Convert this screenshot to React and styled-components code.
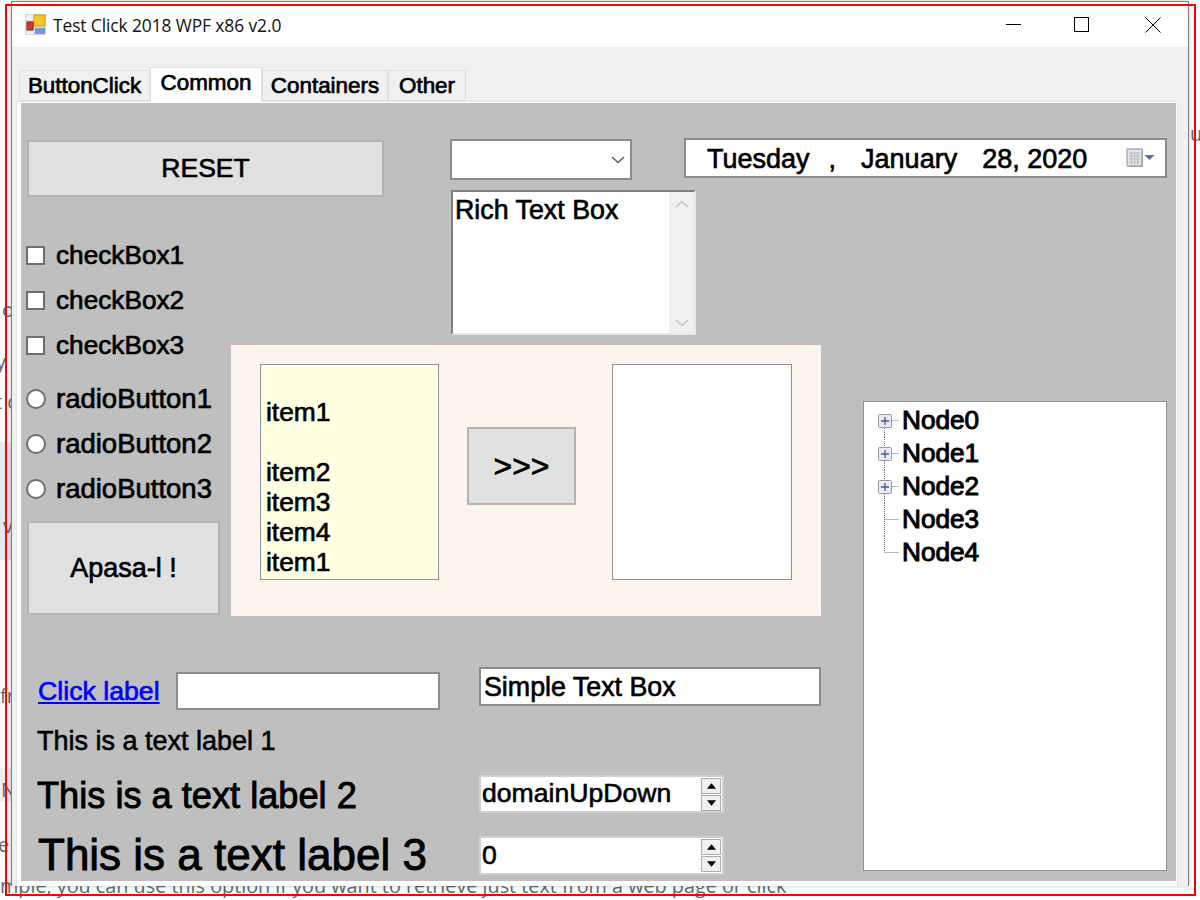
import React from "react";
import styled, { createGlobalStyle } from "styled-components";

const Global = createGlobalStyle`
  html, body { margin: 0; padding: 0; background: #fff; }
  body { font-family: "Liberation Sans", Arial, sans-serif; color: #000; }
`;

const Page = styled.div`
  position: relative;
  width: 1200px;
  height: 900px;
  overflow: hidden;
  background: #fff;
`;

const Fragment = styled.span`
  position: absolute;
  left: ${(p) => p.$x}px;
  top: ${(p) => p.$y}px;
  font: 19.8px/24px "Open Sans", sans-serif;
  color: #63676c;
  white-space: nowrap;
`;

const Shade = styled.div`
  position: absolute;
  left: 0;
  width: 12px;
  top: ${(p) => p.$y}px;
  height: ${(p) => p.$h}px;
  background: ${(p) => p.$c};
`;

const RedFrame = styled.div`
  position: absolute;
  left: 5px;
  top: 4px;
  width: 1187px;
  height: 888px;
  border: 2px solid #fe0000;
  pointer-events: none;
  z-index: 3;
`;

const Window = styled.div`
  position: relative;
  z-index: 1;
  box-sizing: border-box;
  margin: 1px 0 0 11px;
  width: 1178px;
  height: 885px;
  border: 1px solid #7f7f7f;
  border-bottom: 0;
  background: #f0f0f0;
  box-shadow: 0 0 5px rgba(0, 0, 0, 0.22);
  display: flex;
  flex-direction: column;
`;

const TitleBar = styled.div`
  height: 45px;
  flex: none;
  background: #fff;
  display: flex;
  align-items: center;
  padding-left: 13px;
`;

const TitleText = styled.span`
  margin-left: 6px;
  font: 17.4px/20px "Open Sans", sans-serif;
  letter-spacing: -0.1px;
  color: #111;
`;

const Controls = styled.div`
  margin-left: auto;
  display: flex;
  height: 100%;
  align-items: center;
`;

const ControlSlot = styled.div`
  width: ${(p) => p.$w}px;
  display: flex;
  justify-content: center;
`;

const TabStrip = styled.div`
  height: 54px;
  flex: none;
  padding: 19px 0 0 7px;
  box-sizing: border-box;
  display: flex;
  align-items: flex-end;
`;

const Tab = styled.div`
  box-sizing: border-box;
  width: ${(p) => p.$w}px;
  height: ${(p) => (p.$active ? 35 : 31)}px;
  margin-bottom: ${(p) => (p.$active ? -1 : 0)}px;
  background: ${(p) => (p.$active ? "#fff" : "#f0f0f0")};
  border: 1px solid #e0e0e0;
  border-bottom: ${(p) => (p.$active ? 0 : "1px solid #e0e0e0")};
  font-size: 22.4px;
  line-height: 30px;
  text-align: center;
  -webkit-text-stroke: 0.7px #000;
  position: relative;
  z-index: ${(p) => (p.$active ? 1 : 0)};
`;

const TabPage = styled.div`
  flex: none;
  box-sizing: border-box;
  margin-left: 4px;
  width: 1162px;
  height: 785px;
  padding: 1px 1px 3px 4px;
  background: #fff;
  border: 1px solid #e4e4e4;
  border-bottom: 0;
`;

const Panel = styled.div`
  width: 1155px;
  height: 778px;
  background: #bfbfbf;
  display: grid;
  grid-template-columns: 210px 219px 371px 355px;
  grid-template-rows: 127px 115px 271px 265px;
`;

const ResetCell = styled.div`
  grid-column: 1 / 3;
  grid-row: 1;
  padding: 37px 0 0 6px;
`;

const PushButton = styled.div`
  box-sizing: border-box;
  width: ${(p) => p.$w}px;
  height: ${(p) => p.$h}px;
  background: #e1e1e1;
  border: 2px solid #b4b4b4;
  display: flex;
  align-items: center;
  justify-content: center;
  font-size: ${(p) => p.$size || 26}px;
  -webkit-text-stroke: 0.65px #000;
  flex: none;
`;

const LeftList = styled.div`
  grid-column: 1;
  grid-row: 2 / 4;
  padding: 3px 0 0 5px;
`;

const ChoiceRow = styled.div`
  height: 45px;
  display: flex;
  align-items: center;
  gap: ${(p) => p.$gap}px;
  font-size: ${(p) => p.$size}px;
  -webkit-text-stroke: 0.7px #000;
  white-space: nowrap;
  margin-top: ${(p) => p.$mt || 0}px;
`;

const CheckBox = styled.span`
  box-sizing: border-box;
  width: 19px;
  height: 19px;
  background: #fff;
  border: 2px solid #6e6e6e;
  flex: none;
`;

const Radio = styled(CheckBox)`
  border-radius: 50%;
  width: 20px;
  height: 20px;
`;

const ApasaWrap = styled.div`
  margin: 10px 0 0 1px;
`;

const TopRight = styled.div`
  grid-column: 3 / 5;
  grid-row: 1 / 3;
  padding-top: 36px;
  display: flex;
  flex-direction: column;
`;

const TopRow = styled.div`
  display: flex;
  gap: 52px;
`;

const FieldBox = styled.div`
  box-sizing: border-box;
  width: ${(p) => p.$w}px;
  height: ${(p) => p.$h}px;
  background: #fff;
  border: 2px solid #8c8c8c;
  display: flex;
  align-items: center;
  font-size: ${(p) => p.$size || 26}px;
  -webkit-text-stroke: 0.65px #000;
  white-space: nowrap;
  flex: none;
`;

const DateField = styled(FieldBox)`
  position: relative;
  margin-top: -1px;
  padding: 2px 0 0 21px;
`;

const DatePart = styled.span`
  margin-right: ${(p) => p.$mr}px;
`;

const DateIcon = styled.span`
  margin-left: auto;
  margin-right: 9px;
  margin-top: -2px;
  display: flex;
`;

const ComboChevron = styled.span`
  margin-left: auto;
  margin-right: 5px;
  display: flex;
`;

const RichBox = styled.div`
  box-sizing: border-box;
  margin: 10px 0 0 1px;
  width: 245px;
  height: 145px;
  background: #fff;
  border: 2px solid;
  border-color: #808080 #e8e8e8 #e8e8e8 #808080;
  display: flex;
  font-size: 26.8px;
  -webkit-text-stroke: 0.65px #000;
`;

const RichText = styled.div`
  flex: 1;
  padding: 3px 0 0 2px;
  line-height: 30px;
`;

const ScrollTrack = styled.div`
  width: 25px;
  background: #f0f0f0;
  display: flex;
  flex-direction: column;
  align-items: center;
  justify-content: space-between;
  padding: 8px 0 6px;
`;

const PeachPanel = styled.div`
  grid-column: 2 / 4;
  grid-row: 3;
  background: #fff3ee;
  padding: 19px 0 0 29px;
  display: flex;
  align-items: flex-start;
`;

const ListBox = styled.div`
  box-sizing: border-box;
  width: ${(p) => p.$w}px;
  height: 216px;
  flex: none;
  margin-left: ${(p) => p.$ml || 0}px;
  background: ${(p) => p.$bg};
  border: 1px solid #8f8f98;
  padding: 2px 0 0 5px;
  font-size: 26.4px;
  line-height: 30px;
  -webkit-text-stroke: 0.65px #000;
`;

const ListLine = styled.div`
  height: 30px;
`;

const MoveWrap = styled.div`
  margin: 63px 0 0 28px;
`;

const TreeCell = styled.div`
  grid-column: 4;
  grid-row: 3 / 5;
  padding: 56px 0 0 42px;
`;

const TreeBox = styled.div`
  box-sizing: border-box;
  width: 304px;
  height: 470px;
  background: #fff;
  border: 1px solid #8f949a;
  padding: 2px 0 0 10px;
`;

const TreeRow = styled.div`
  height: 33px;
  display: flex;
  align-items: center;
  font-size: 26.2px;
  -webkit-text-stroke: 1px #000;
`;

const TreeLabel = styled.span`
  margin-left: 2px;
`;

const BottomArea = styled.div`
  grid-column: 1 / 4;
  grid-row: 4;
  display: flex;
`;

const BottomLeft = styled.div`
  width: 458px;
  flex: none;
  box-sizing: border-box;
  padding: 56px 0 0 17px;
`;

const ClickRow = styled.div`
  display: flex;
  align-items: center;
  height: 38px;
`;

const ClickLink = styled.a`
  width: 138px;
  flex: none;
  padding-top: 1px;
  font-size: 26.7px;
  color: #0000ff;
  text-decoration: underline;
  -webkit-text-stroke: 0.65px #0000ff;
`;

const TextLabel = styled.div`
  font-size: ${(p) => p.$size}px;
  line-height: ${(p) => p.$lh}px;
  height: ${(p) => p.$lh}px;
  margin: ${(p) => p.$mt}px 0 0 ${(p) => p.$ml}px;
  -webkit-text-stroke: ${(p) => p.$stroke}px #000;
  white-space: nowrap;
`;

const BottomRight = styled.div`
  padding-top: 51px;
`;

const SimpleBox = styled(FieldBox)`
  padding: 2px 0 0 3px;
`;

const SpinBox = styled.div`
  box-sizing: border-box;
  width: 245px;
  height: ${(p) => p.$h}px;
  margin-top: ${(p) => p.$mt}px;
  background: #fff;
  border: 2px solid #d0d0d0;
  padding-left: 1px;
  display: flex;
  align-items: center;
  font-size: 26.6px;
  -webkit-text-stroke: 0.6px #000;
`;

const SpinText = styled.span`
  margin-top: ${(p) => p.$mt || 0}px;
`;

const Spin = styled.div`
  margin-left: auto;
  margin-right: 1px;
  display: flex;
  flex-direction: column;
  gap: 1px;
`;

const SpinButton = styled.div`
  box-sizing: border-box;
  width: 20px;
  height: 16px;
  background: #f0f0f0;
  border: 1px solid #adadad;
  display: flex;
  align-items: center;
  justify-content: center;
`;

const Logo = () => (
  <svg width="22" height="22" viewBox="0 0 22 22">
    <rect x="0" y="0" width="21" height="21" fill="#d8d8d8" />
    <rect x="1" y="1" width="7" height="5" fill="#f1f1f1" />
    <rect x="9" y="1" width="11" height="11" fill="#f6c62e" stroke="#d49a10" />
    <rect x="2" y="8" width="6" height="8" fill="#cc3a30" stroke="#8e2018" />
    <rect x="10" y="14" width="10" height="6" fill="#6d9ae6" />
    <rect x="1" y="17" width="7" height="3" fill="#f1f1f1" />
  </svg>
);

const Minimize = () => (
  <svg width="16" height="16" viewBox="0 0 16 16"><path d="M0 7.5H15" stroke="#000" strokeWidth="1" /></svg>
);
const Maximize = () => (
  <svg width="16" height="16" viewBox="0 0 16 16"><rect x="0.5" y="0.5" width="14" height="14" fill="none" stroke="#000" /></svg>
);
const CloseIcon = () => (
  <svg width="16" height="16" viewBox="0 0 16 16"><path d="M0.5 0.5L15.5 15.5M15.5 0.5L0.5 15.5" stroke="#000" strokeWidth="1" /></svg>
);

const Chevron = ({ up, color = "#606060", w = 14 }) => (
  <svg width={w} height="8" viewBox="0 0 14 8">
    <path d={up ? "M1 7L7 1.5L13 7" : "M1 1L7 6.5L13 1"} fill="none" stroke={color} strokeWidth="1.6" />
  </svg>
);

const CalendarIcon = () => (
  <svg width="30" height="20" viewBox="0 0 30 20">
    <rect x="2" y="2" width="15" height="17" fill="#b9b9b9" />
    <rect x="1" y="1" width="15" height="17" fill="#dfe3ea" stroke="#8d9199" />
    <path d="M3 5H14M3 8H14M3 11H14M3 14H14M5.5 4V16M8.5 4V16M11.5 4V16" stroke="#aeb4c0" strokeWidth="0.8" />
    <path d="M18.5 7H28.5L23.5 12Z" fill="#5a6f9c" />
  </svg>
);

const Arrow = ({ up }) => (
  <svg width="9" height="6" viewBox="0 0 8 5">
    <path d={up ? "M0 5H8L4 0Z" : "M0 0H8L4 5Z"} fill="#000" />
  </svg>
);

const TreeGlyph = ({ plus, first, last }) => (
  <svg width="26" height="33" viewBox="0 0 26 33" style={{ flex: "none" }}>
    <path
      d={`M10.5 ${first ? 16 : 0}V${last ? 16 : 33}`}
      stroke="#707070"
      strokeDasharray="1 1"
      fill="none"
    />
    <path d="M10.5 16.5H25" stroke="#707070" strokeDasharray="1 1" fill="none" />
    {plus && (
      <g>
        <rect x="4.5" y="10.5" width="13" height="13" rx="1" fill="#e9ebf1" stroke="#999" />
        <path d="M7 17H15M11 13V21" stroke="#3f5a9c" strokeWidth="1.3" />
      </g>
    )}
  </svg>
);

const SpinControl = () => (
  <Spin>
    <SpinButton><Arrow up /></SpinButton>
    <SpinButton><Arrow /></SpinButton>
  </Spin>
);

const bottomCopy =
  "mple, you can use this option if you want to retrieve just text from a web page or click";

export default function App() {
  return (
    <Page>
      <Global />
      <Shade $y={442} $h={118} $c="#e4eaf0" />
      <Shade $y={768} $h={34} $c="#efefef" />
      <Fragment $x={2} $y={298}>o</Fragment>
      <Fragment $x={-4} $y={350}>y s</Fragment>
      <Fragment $x={-5} $y={390}>t c</Fragment>
      <Fragment $x={3} $y={514}>v</Fragment>
      <Fragment $x={0} $y={684}>fr</Fragment>
      <Fragment $x={1} $y={778}>N</Fragment>
      <Fragment $x={-2} $y={833}>e</Fragment>
      <Fragment $x={0} $y={874}>{bottomCopy}</Fragment>
      <Fragment $x={1190} $y={122}>u</Fragment>
      <RedFrame />
      <Window>
        <TitleBar>
          <Logo />
          <TitleText>Test Click 2018 WPF x86 v2.0</TitleText>
          <Controls>
            <ControlSlot $w={67}><Minimize /></ControlSlot>
            <ControlSlot $w={70}><Maximize /></ControlSlot>
            <ControlSlot $w={71}><CloseIcon /></ControlSlot>
          </Controls>
        </TitleBar>
        <TabStrip>
          <Tab $w={131}>ButtonClick</Tab>
          <Tab $w={112} $active>Common</Tab>
          <Tab $w={126}>Containers</Tab>
          <Tab $w={78}>Other</Tab>
        </TabStrip>
        <TabPage>
          <Panel>
            <ResetCell>
              <PushButton $w={357} $h={57} $size={26.5}>RESET</PushButton>
            </ResetCell>
            <LeftList>
              <ChoiceRow $size={26.2} $gap={11}><CheckBox />checkBox1</ChoiceRow>
              <ChoiceRow $size={26.2} $gap={11}><CheckBox />checkBox2</ChoiceRow>
              <ChoiceRow $size={26.2} $gap={11}><CheckBox />checkBox3</ChoiceRow>
              <ChoiceRow $size={27.5} $gap={10} $mt={8}><Radio />radioButton1</ChoiceRow>
              <ChoiceRow $size={27.5} $gap={10}><Radio />radioButton2</ChoiceRow>
              <ChoiceRow $size={27.5} $gap={10}><Radio />radioButton3</ChoiceRow>
              <ApasaWrap>
                <PushButton $w={193} $h={94} $size={27}>Apasa-l !</PushButton>
              </ApasaWrap>
            </LeftList>
            <TopRight>
              <TopRow>
                <FieldBox $w={182} $h={41}>
                  <ComboChevron><Chevron /></ComboChevron>
                </FieldBox>
                <DateField $w={483} $h={40} $size={27}>
                  <DatePart $mr={19}>Tuesday</DatePart>
                  <DatePart $mr={25}>,</DatePart>
                  <DatePart $mr={25}>January</DatePart>
                  <DatePart $mr={0}>28, 2020</DatePart>
                  <DateIcon><CalendarIcon /></DateIcon>
                </DateField>
              </TopRow>
              <RichBox>
                <RichText>Rich Text Box</RichText>
                <ScrollTrack>
                  <Chevron up color="#c4c4c4" />
                  <Chevron color="#c4c4c4" />
                </ScrollTrack>
              </RichBox>
            </TopRight>
            <PeachPanel>
              <ListBox $w={179} $bg="#ffffe1">
                <ListLine />
                <ListLine>item1</ListLine>
                <ListLine />
                <ListLine>item2</ListLine>
                <ListLine>item3</ListLine>
                <ListLine>item4</ListLine>
                <ListLine>item1</ListLine>
              </ListBox>
              <MoveWrap>
                <PushButton $w={109} $h={78} $size={32}>&gt;&gt;&gt;</PushButton>
              </MoveWrap>
              <ListBox $w={180} $ml={36} $bg="#fff" />
            </PeachPanel>
            <TreeCell>
              <TreeBox>
                <TreeRow><TreeGlyph plus first /><TreeLabel>Node0</TreeLabel></TreeRow>
                <TreeRow><TreeGlyph plus /><TreeLabel>Node1</TreeLabel></TreeRow>
                <TreeRow><TreeGlyph plus /><TreeLabel>Node2</TreeLabel></TreeRow>
                <TreeRow><TreeGlyph /><TreeLabel>Node3</TreeLabel></TreeRow>
                <TreeRow><TreeGlyph last /><TreeLabel>Node4</TreeLabel></TreeRow>
              </TreeBox>
            </TreeCell>
            <BottomArea>
              <BottomLeft>
                <ClickRow>
                  <ClickLink>Click label</ClickLink>
                  <FieldBox $w={264} $h={38} />
                </ClickRow>
                <TextLabel $size={27} $lh={30} $mt={16} $ml={-1} $stroke={0.6}>This is a text label 1</TextLabel>
                <TextLabel $size={36.2} $lh={44} $mt={18} $ml={-1} $stroke={0.9}>This is a text label 2</TextLabel>
                <TextLabel $size={44} $lh={50} $mt={12} $ml={0} $stroke={0.9}>This is a text label 3</TextLabel>
              </BottomLeft>
              <BottomRight>
                <SimpleBox $w={342} $h={39} $size={26.8}>Simple Text Box</SimpleBox>
                <SpinBox $h={38} $mt={69}><SpinText $mt={-2}>domainUpDown</SpinText><SpinControl /></SpinBox>
                <SpinBox $h={39} $mt={23}><SpinText>0</SpinText><SpinControl /></SpinBox>
              </BottomRight>
            </BottomArea>
          </Panel>
        </TabPage>
      </Window>
    </Page>
  );
}
